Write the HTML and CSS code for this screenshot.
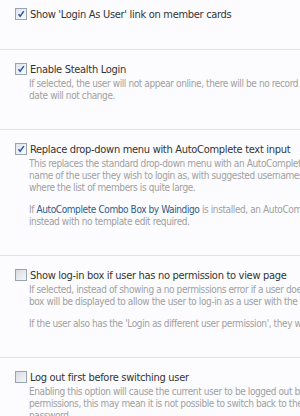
FILE: index.html
```html
<!DOCTYPE html>
<html lang="en">
<head>
  <meta charset="UTF-8">
  <title>Login As User Options</title>
  <link rel="stylesheet" href="styles.css">
</head>
<body>
  <div class="options">
    <div class="option">
      <label class="option-label">
        <span class="check checked"><svg viewBox="0 0 12 12"><path d="M3 6.2 L5 8.6 L9.4 2.6" /></svg></span>
        Show 'Login As User' link on member cards
      </label>
    </div>

    <div class="option">
      <label class="option-label">
        <span class="check checked"><svg viewBox="0 0 12 12"><path d="M3 6.2 L5 8.6 L9.4 2.6" /></svg></span>
        Enable Stealth Login
      </label>
      <p class="hint">If selected, the user will not appear online, there will be no record of their visit and their last activity<br>date will not change.</p>
    </div>

    <div class="option">
      <label class="option-label">
        <span class="check checked"><svg viewBox="0 0 12 12"><path d="M3 6.2 L5 8.6 L9.4 2.6" /></svg></span>
        Replace drop-down menu with AutoComplete text input
      </label>
      <p class="hint">This replaces the standard drop-down menu with an AutoComplete text input, allowing the user to type the<br>name of the user they wish to login as, with suggested usernames being displayed. This is useful for forums<br>where the list of members is quite large.</p>
      <p class="hint">If <a href="#">AutoComplete Combo Box by Waindigo</a> is installed, an AutoComplete combo box will be used<br>instead with no template edit required.</p>
    </div>

    <div class="option">
      <label class="option-label">
        <span class="check"></span>
        Show log-in box if user has no permission to view page
      </label>
      <p class="hint">If selected, instead of showing a no permissions error if a user does not have permission to view a page, a log-in<br>box will be displayed to allow the user to log-in as a user with the appropriate permissions.</p>
      <p class="hint">If the user also has the 'Login as different user permission', they will be able to choose which user to log in as.</p>
    </div>

    <div class="option">
      <label class="option-label">
        <span class="check"></span>
        Log out first before switching user
      </label>
      <p class="hint">Enabling this option will cause the current user to be logged out before switching user. If the user has limited<br>permissions, this may mean it is not possible to switch back to the original user without entering their<br>password.</p>
    </div>
  </div>
</body>
</html>
```

FILE: styles.css
```css
* {
  margin: 0;
  padding: 0;
  box-sizing: border-box;
}

body {
  background: #fcfcfe;
  font-family: 'DejaVu Sans Condensed', 'DejaVu Sans', sans-serif;
  overflow: hidden;
  width: 300px;
  height: 416px;
}

.options {
  margin-top: -5px;
}

.option {
  padding: 11px 0 27px 15px;
  border-bottom: 1px solid #dde5ec;
  white-space: nowrap;
}

.option-label {
  display: flex;
  align-items: center;
  gap: 3px;
  height: 16px;
  font-size: 11px;
  letter-spacing: -0.3px;
  color: #333;
}

.check {
  width: 12px;
  height: 12px;
  border: 1px solid #97a3b0;
  background: linear-gradient(135deg, #d8dbe0, #f6f7f9);
  flex: none;
}

.check.checked {
  background: linear-gradient(135deg, #dfe3ea, #fafbfc);
}

.check svg {
  display: block;
  width: 10px;
  height: 10px;
}

.check path {
  fill: none;
  stroke: #2f58a8;
  stroke-width: 1.8;
}

.hint {
  padding-left: 14px;
  font-size: 10px;
  line-height: 12px;
  letter-spacing: -0.4px;
  color: #a0a0a0;
}

.option-label + .hint {
  padding-top: 1px;
}

.hint + .hint {
  margin-top: 10px;
}

.hint a {
  color: #2b5b8c;
  text-decoration: none;
}
```
